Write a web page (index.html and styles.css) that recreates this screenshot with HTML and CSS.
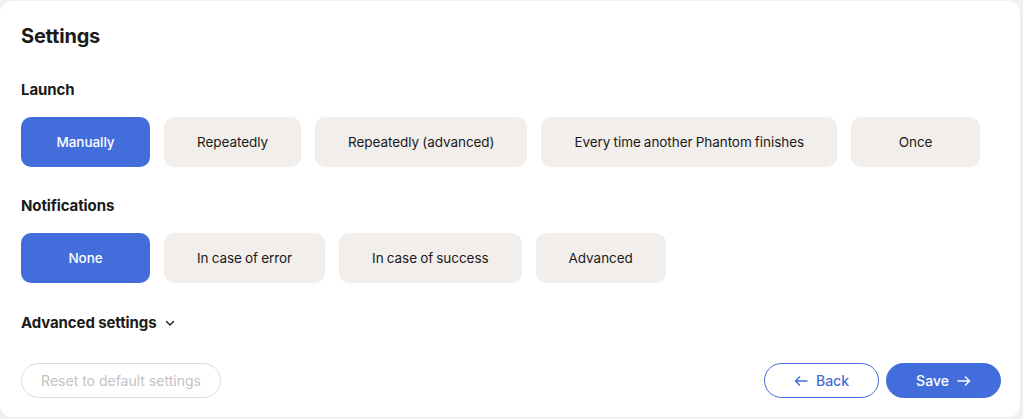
FILE: index.html
```html
<!DOCTYPE html>
<html lang="en">
<head>
  <meta charset="UTF-8">
  <title>Settings</title>
  <link rel="stylesheet" href="styles.css">
</head>
<body>
  <div class="card">
    <h1 class="title">Settings</h1>

    <div class="section">
      <div class="label">Launch</div>
      <div class="options">
        <button class="option active">Manually</button>
        <button class="option">Repeatedly</button>
        <button class="option">Repeatedly (advanced)</button>
        <button class="option">Every time another Phantom finishes</button>
        <button class="option">Once</button>
      </div>
    </div>

    <div class="section">
      <div class="label">Notifications</div>
      <div class="options">
        <button class="option active">None</button>
        <button class="option">In case of error</button>
        <button class="option">In case of success</button>
        <button class="option">Advanced</button>
      </div>
    </div>

    <div class="advanced">
      Advanced settings
      <svg width="12" height="12" viewBox="0 0 12 12" fill="none" stroke="#1a1a1a" stroke-width="1.4" stroke-linecap="round" stroke-linejoin="round"><path d="M2.5 4.5 6 8l3.5-3.5"/></svg>
    </div>

    <div class="footer">
      <button class="pill reset">Reset to default settings</button>
      <div class="nav">
        <button class="pill back">
          <svg width="14" height="10" viewBox="0 0 14 10" fill="none" stroke="currentColor" stroke-width="1.5" stroke-linecap="round" stroke-linejoin="round"><path d="M13 5H1.5M5.5 1 1.5 5l4 4"/></svg>
          Back
        </button>
        <button class="pill save">
          Save
          <svg width="14" height="10" viewBox="0 0 14 10" fill="none" stroke="currentColor" stroke-width="1.5" stroke-linecap="round" stroke-linejoin="round"><path d="M1 5h11.5M8.5 1l4 4-4 4"/></svg>
        </button>
      </div>
    </div>
  </div>
</body>
</html>
```

FILE: styles.css
```css
body {
  margin: 0;
  padding: 1px 3px 2px 0;
  background: #f3efed;
  font-family: 'Inter', 'Liberation Sans', sans-serif;
  color: #1a1a1a;
}
.card {
  background: #fff;
  border-radius: 12px;
  padding: 19px 19px 19px 21px;
  height: 416px;
  box-sizing: border-box;
}
.title {
  margin: 0;
  font-size: 20px;
  line-height: 32px;
  font-weight: 700;
  letter-spacing: -0.2px;
}
.section {
  margin-top: 28px;
}
.section + .section {
  margin-top: 29px;
}
.label {
  font-size: 15px;
  line-height: 20px;
  font-weight: 700;
  letter-spacing: -0.1px;
}
.options {
  display: flex;
  gap: 14px;
  margin-top: 17px;
}
.option {
  height: 50px;
  min-width: 129px;
  padding: 0 33px;
  border: none;
  border-radius: 10px;
  background: #f2eeeb;
  color: #1a1a1a;
  font-family: inherit;
  font-size: 13.5px;
  letter-spacing: -0.05px;
  word-spacing: -0.6px;
  cursor: pointer;
}
.option.active {
  background: #436ddb;
  color: #fff;
  font-weight: 500;
}
.advanced {
  margin-top: 30px;
  display: flex;
  align-items: center;
  gap: 7px;
  font-size: 15px;
  line-height: 20px;
  font-weight: 700;
  letter-spacing: -0.1px;
}
.footer {
  margin-top: 30px;
  display: flex;
  justify-content: space-between;
  align-items: center;
}
.nav {
  display: flex;
  gap: 7px;
}
.pill {
  height: 35px;
  border-radius: 18px;
  font-family: inherit;
  font-size: 14px;
  font-weight: 500;
  display: flex;
  align-items: center;
  justify-content: center;
  gap: 8px;
  cursor: pointer;
}
.reset {
  width: 200px;
  background: #fff;
  border: 1px solid #dcdcdc;
  color: #c3c3c3;
  font-weight: 400;
}
.back {
  width: 115px;
  background: #fff;
  border: 1px solid #436ddb;
  color: #436ddb;
}
.save {
  width: 115px;
  background: #436ddb;
  border: 1px solid #436ddb;
  color: #fff;
}
```
